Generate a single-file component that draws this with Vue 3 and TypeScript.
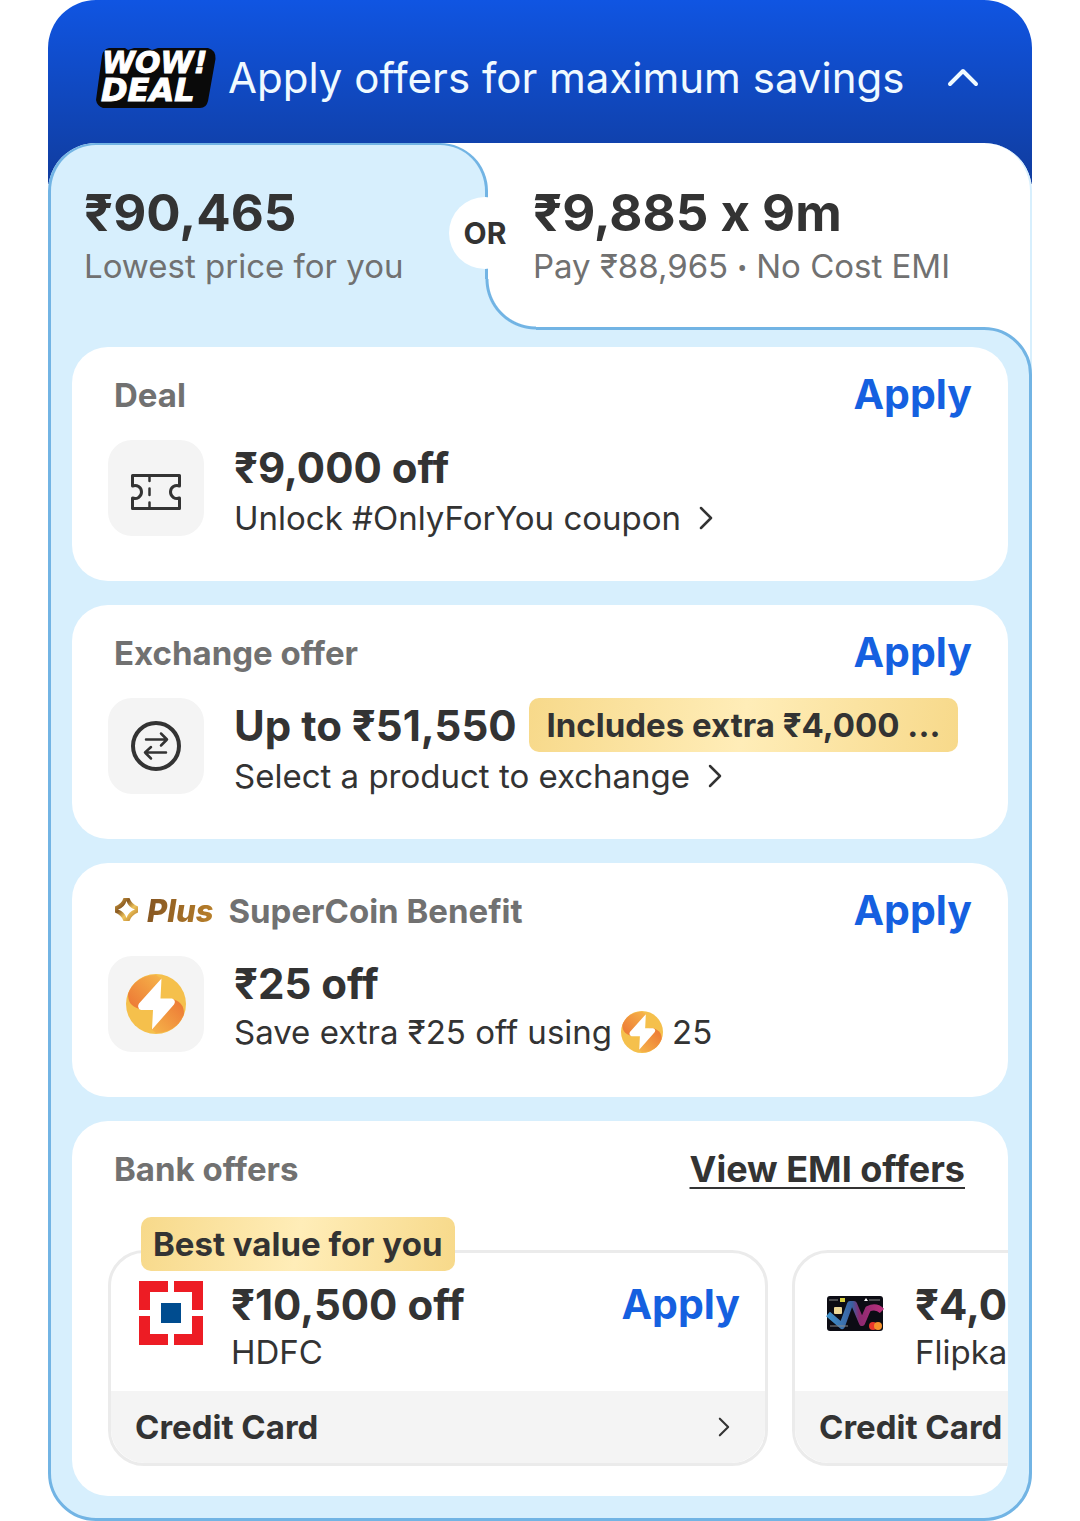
<script setup lang="ts">
import { ref } from 'vue'

interface BankOffer {
  bank: string
  amount: string
  method: string
  logo: 'hdfc' | 'card'
  badge?: string
}

const mode = ref<'full' | 'emi'>('full')

const bankOffers: BankOffer[] = [
  { bank: 'HDFC', amount: '₹10,500 off', method: 'Credit Card', logo: 'hdfc', badge: 'Best value for you' },
  { bank: 'Flipkart Axis', amount: '₹4,000 off', method: 'Credit Card', logo: 'card' },
]
</script>

<template>
  <main class="offers">
    <header class="banner">
      <svg class="wow" viewBox="0 0 120 60" width="120" height="60" role="img" aria-label="WOW! DEAL">
        <path
          d="M13 0H29L32 2L38 0H52L56 2L62 0H112Q120 2 119.500 11L112 53Q110.500 60 104 60H7Q1 58 0 52L6 8Q7 1 13 0Z"
          fill="#0a0a0a"
        />
        <text x="6" y="25" class="wow-text">WOW!</text>
        <text x="5" y="53" class="wow-text deal-text">DEAL</text>
      </svg>
      <h1 class="banner-title">Apply offers for maximum savings</h1>
      <button class="icon-button" type="button" aria-label="Collapse offers">
        <svg viewBox="0 0 36 24" width="36" height="24">
          <path d="M5 18L18 5L31 18" fill="none" stroke="#f0faff" stroke-width="4" stroke-linecap="round" stroke-linejoin="round" />
        </svg>
      </button>
    </header>

    <div class="panel">
      <div class="tabs">
        <div class="tab-slot">
          <button class="tab tab-left" type="button" :aria-pressed="mode === 'full'" @click="mode = 'full'">
            <span class="price">₹90,465</span>
            <span class="note">Lowest price for you</span>
          </button>
        </div>
        <button class="tab tab-right" type="button" :aria-pressed="mode === 'emi'" @click="mode = 'emi'">
          <span class="price">₹9,885 x 9m</span>
          <span class="note">Pay ₹88,965 <span class="dot">•</span> No Cost EMI</span>
        </button>
        <span class="or">OR</span>
      </div>

      <div class="body-wrap">
        <div class="body">
          <section class="card">
            <div class="card-head">
              <h2 class="card-label">Deal</h2>
              <button class="apply" type="button">Apply</button>
            </div>
            <div class="row">
              <div class="tile">
                <svg viewBox="0 -8 52 46" width="52" height="46" fill="none" stroke="#333" stroke-width="3" stroke-linecap="round" stroke-linejoin="round">
                  <path d="M2.500 2.500H49.500V13A6.500 6.500 0 1 0 49.500 25V35.500H2.500V25A6.500 6.500 0 1 0 2.500 13Z" />
                  <path d="M19.500 4V8M19.500 15.500V22M19.500 29.500V34" stroke-width="2.500" />
                </svg>
              </div>
              <div class="texts">
                <p class="amount">₹9,000 off</p>
                <a class="detail detail-link" href="#">Unlock #OnlyForYou coupon
                  <svg class="chevron" viewBox="0 0 14 24" width="14" height="24"><path d="M2 2L12 12L2 22" /></svg>
                </a>
              </div>
            </div>
          </section>

          <section class="card">
            <div class="card-head">
              <h2 class="card-label">Exchange offer</h2>
              <button class="apply" type="button">Apply</button>
            </div>
            <div class="row">
              <div class="tile">
                <svg viewBox="0 0 50 50" width="50" height="50" fill="none" stroke="#333" stroke-linecap="round" stroke-linejoin="round">
                  <circle cx="25" cy="25" r="23" stroke-width="4" />
                  <path d="M15 18.500H36M30 12.500L36 18.500L30 24.500M35 31.500H14M20 26L14 31.500L20 37.500" stroke-width="2.500" />
                </svg>
              </div>
              <div class="texts">
                <div class="amount-line">
                  <p class="amount">Up to ₹51,550</p>
                  <span class="badge">Includes extra ₹4,000 ...</span>
                </div>
                <a class="detail detail-link" href="#">Select a product to exchange
                  <svg class="chevron" viewBox="0 0 14 24" width="14" height="24"><path d="M2 2L12 12L2 22" /></svg>
                </a>
              </div>
            </div>
          </section>

          <section class="card">
            <div class="card-head">
              <div class="plus-label">
                <svg viewBox="0 0 25 25" width="25" height="25">
                  <defs>
                    <linearGradient id="gold" x1="0" y1="0" x2="1" y2="1">
                      <stop offset="0" stop-color="#e7b64a" />
                      <stop offset=".35" stop-color="#8a5a22" />
                      <stop offset=".6" stop-color="#efc45c" />
                      <stop offset="1" stop-color="#a86b1c" />
                    </linearGradient>
                  </defs>
                  <path
                    d="M9.500 1H15.500Q17.500 7 24 9.500V15.500Q17.500 18 15.500 24H9.500Q7.500 18 1 15.500V9.500Q7.500 7 9.500 1ZM12.500 4Q14.500 10.500 21 12.500Q14.500 14.500 12.500 21Q10.500 14.500 4 12.500Q10.500 10.500 12.500 4Z"
                    fill="url(#gold)"
                    fill-rule="evenodd"
                  />
                </svg>
                <span class="plus">Plus</span>
                <h2 class="card-label">SuperCoin Benefit</h2>
              </div>
              <button class="apply" type="button">Apply</button>
            </div>
            <div class="row">
              <div class="tile">
                <svg viewBox="0 0 60 60" width="60" height="60">
                  <defs>
                    <linearGradient id="coinA" x1="0" y1="1" x2="1" y2="0">
                      <stop offset="0" stop-color="#ec7434" />
                      <stop offset="1" stop-color="#f6b64a" />
                    </linearGradient>
                    <linearGradient id="coinB" x1="1" y1="0" x2="0" y2="1">
                      <stop offset="0" stop-color="#ec7434" />
                      <stop offset="1" stop-color="#f6b64a" />
                    </linearGradient>
                  </defs>
                  <g id="coin">
                    <circle cx="30" cy="30" r="30" fill="#f5c04c" />
                    <path d="M13 35C5 32 2 28 2 20C6 8 17 1 30 1L36 5L20 35Z" fill="url(#coinA)" />
                    <path d="M47 25C55 28 58 32 58 40C54 52 43 59 30 59L25 55L40 25Z" fill="url(#coinB)" />
                    <path d="M35.500 4.500L34.500 24.500H46Q50.500 26 48 30.500L26 55.500L27 36H15Q10.500 34 13 29.500Z" fill="#fff" />
                  </g>
                </svg>
              </div>
              <div class="texts">
                <p class="amount">₹25 off</p>
                <p class="detail coin-detail">
                  Save extra ₹25 off using
                  <svg viewBox="0 0 60 60" width="42" height="42" aria-hidden="true"><use href="#coin" /></svg>
                  25
                </p>
              </div>
            </div>
          </section>

          <section class="card bank-card">
            <div class="card-head">
              <h2 class="card-label">Bank offers</h2>
              <a class="emi-link" href="#">View EMI offers</a>
            </div>
            <ul class="bank-list">
              <li v-for="offer in bankOffers" :key="offer.bank" class="bank">
                <span v-if="offer.badge" class="badge bank-badge">{{ offer.badge }}</span>
                <div class="bank-main">
                  <div class="bank-logo">
                    <svg v-if="offer.logo === 'hdfc'" viewBox="0 0 66 66" width="66" height="66">
                      <path d="M1 1H30V12H12V30H1ZM36 1H65V30H54V12H36ZM1 36H12V54H30V65H1ZM54 36H65V65H36V54H54Z" fill="#ed1c24" />
                      <rect x="23" y="23" width="20" height="20" fill="#004c8f" />
                    </svg>
                    <svg v-else viewBox="0 0 58 36" width="58" height="36">
                      <defs>
                        <linearGradient id="ribbon" x1="0" y1="0" x2="1" y2="0">
                          <stop offset="0" stop-color="#3f90c8" />
                          <stop offset=".45" stop-color="#3a60a0" />
                          <stop offset=".58" stop-color="#8a2a70" />
                          <stop offset="1" stop-color="#b8307c" />
                        </linearGradient>
                      </defs>
                      <rect x="1" y="1" width="56" height="35" rx="3" fill="#0c0c14" />
                      <path d="M2 19L16 31L24 9H28L36 28L42 14Q50 10 56 16" fill="none" stroke="url(#ribbon)" stroke-width="6" stroke-linejoin="round" />
                      <rect x="8" y="12" width="8" height="7" rx="1" fill="#ecd898" />
                      <path d="M3 5H12M43 5H54M4 31H22" stroke="#888" stroke-width="1" />
                      <rect x="14" y="3" width="5" height="4" fill="#d8d040" />
                      <path d="M38 6L40 3L42 6Z" fill="#fff" />
                      <circle cx="47" cy="31" r="4" fill="#e8382c" />
                      <circle cx="52" cy="31" r="4" fill="#f5912c" />
                    </svg>
                  </div>
                  <div class="bank-texts">
                    <p class="amount">{{ offer.amount }}</p>
                    <p class="detail">{{ offer.bank }}</p>
                  </div>
                  <button class="apply" type="button">Apply</button>
                </div>
                <a class="bank-foot" href="#">
                  <span>{{ offer.method }}</span>
                  <svg class="chevron" viewBox="0 0 14 24" width="12" height="20"><path d="M2 2L12 12L2 22" /></svg>
                </a>
              </li>
            </ul>
          </section>
        </div>
      </div>
    </div>
  </main>
</template>

<style>
body {
  background: #fff;
}
</style>

<style scoped>
.offers,
.offers * {
  box-sizing: border-box;
}

.offers {
  margin: 0 48px;
  border-radius: 48px 48px 0 0;
  background: linear-gradient(#1055e2, #103c9e) no-repeat 0 0 / 100% 184px;
  font-family: Inter, "Noto Sans", sans-serif;
  font-feature-settings: "calt" 0;
  color: #333;
}

h1,
h2,
p,
ul {
  margin: 0;
  padding: 0;
}

button {
  border: 0;
  padding: 0;
  background: none;
  color: inherit;
  font: inherit;
  font-feature-settings: inherit;
  cursor: pointer;
}

a {
  color: inherit;
  text-decoration: none;
}

svg {
  display: block;
  flex: none;
}

.banner {
  display: flex;
  align-items: center;
  height: 143px;
  padding: 12px 51px 0 48px;
}

.wow-text {
  fill: #fff;
  stroke: #fff;
  stroke-width: 1;
  font: italic 700 30px "DejaVu Sans", sans-serif;
}

.deal-text {
  font-size: 32px;
}

.banner-title {
  flex: 1;
  padding-left: 12px;
  color: #f0faff;
  font-size: 42px;
  font-weight: 400;
  line-height: 56px;
  white-space: nowrap;
}

.panel {
  border-radius: 48px;
  background: #fff;
}

.tabs {
  position: relative;
  z-index: 1;
  display: flex;
  height: 184px;
}

.tab-slot {
  flex: none;
  width: 440px;
}

.tab {
  display: flex;
  flex-direction: column;
  align-items: flex-start;
  padding-top: 42px;
  text-align: left;
  white-space: nowrap;
}

.tab-left {
  width: 100%;
  height: 187px;
  padding-top: 40px;
  padding-left: 33px;
  border: 3px solid #72b4e4;
  border-top-width: 2px;
  border-bottom: 0;
  border-radius: 48px 48px 0 0;
  background: #d7effd;
}

.tab-right {
  position: relative;
  flex: 1;
  padding-left: 45px;
  border-right: 2px solid #d7effd;
  border-radius: 0 48px 0 0;
}

.tab-right::before {
  content: "";
  position: absolute;
  left: -3px;
  bottom: -3px;
  width: 51px;
  height: 51px;
  background: radial-gradient(circle at 100% 0, #fff 47px, #72b4e4 48px, #72b4e4 50px, #d7effd 51px);
}

.price {
  font-size: 51px;
  font-weight: 700;
  line-height: 56px;
}

.note {
  color: #717171;
  font-size: 33px;
  line-height: 50px;
}

.dot {
  font-family: Roboto, sans-serif;
  font-size: 28px;
}

.or {
  position: absolute;
  top: 54px;
  left: 401px;
  width: 72px;
  height: 72px;
  border-radius: 36px;
  background: #fff;
  font-size: 30px;
  font-weight: 700;
  line-height: 72px;
  text-align: center;
}

.body-wrap {
  border-radius: 0 0 48px 48px;
  box-shadow: inset -2px 0 #d7effd;
}

.body {
  display: flex;
  flex-direction: column;
  gap: 24px;
  padding: 17px 21px 22px;
  border: 3px solid #72b4e4;
  border-radius: 0 48px 48px 48px;
  background: #d7effd;
}

.card {
  padding: 0 36px 45px;
  border-radius: 36px;
  background: #fff;
  overflow: hidden;
}

.card-head {
  display: flex;
  align-items: center;
  justify-content: space-between;
  height: 93px;
  padding-left: 6px;
}

.card-label {
  padding-top: 2px;
  color: #717171;
  font-size: 33px;
  font-weight: 700;
  line-height: 44px;
}

.apply {
  color: #1560e0;
  font-size: 41px;
  font-weight: 700;
  line-height: 54px;
}

.row {
  display: flex;
  gap: 30px;
}

.tile {
  display: flex;
  flex: none;
  align-items: center;
  justify-content: center;
  width: 96px;
  height: 96px;
  border-radius: 24px;
  background: #f4f4f4;
}

.texts {
  flex: 1;
  min-width: 0;
  height: 96px;
}

.amount {
  padding-top: 1px;
  font-size: 42px;
  font-weight: 700;
  line-height: 54px;
  white-space: nowrap;
}

.amount-line {
  display: flex;
  align-items: flex-start;
  gap: 12px;
}

.detail {
  display: flex;
  align-items: center;
  font-size: 33px;
  line-height: 40px;
  white-space: nowrap;
}

.detail-link {
  gap: 18px;
  line-height: 46px;
}

.coin-detail {
  gap: 9px;
}

.chevron path {
  fill: none;
  stroke: #333;
  stroke-width: 2.500;
  stroke-linecap: round;
  stroke-linejoin: round;
}

.badge {
  height: 54px;
  padding: 0 18px;
  border-radius: 10px;
  background: linear-gradient(100deg, #f7d98a, #ffedb8 50%, #f7d98a);
  color: #333;
  font-size: 33px;
  font-weight: 700;
  line-height: 54px;
  white-space: nowrap;
}

.plus-label {
  display: flex;
  align-items: center;
}

.plus {
  padding: 2px 15px 0 8px;
  background: linear-gradient(100deg, #7d4f20, #c58a2c);
  background-clip: text;
  color: transparent;
  font-size: 31px;
  font-style: italic;
  font-weight: 800;
  line-height: 44px;
}

.bank-card {
  padding-bottom: 30px;
}

.emi-link {
  margin-right: 7px;
  padding-top: 2px;
  font-size: 36px;
  font-weight: 700;
  line-height: 48px;
  text-decoration: underline;
  text-decoration-thickness: 2px;
  text-underline-offset: 5px;
}

.bank-list {
  display: flex;
  gap: 24px;
  padding-top: 36px;
  list-style: none;
}

.bank {
  position: relative;
  flex: none;
  width: 660px;
  border: 3px solid #ebebeb;
  border-radius: 36px;
}

.bank-badge {
  position: absolute;
  top: -36px;
  left: 30px;
  padding: 0 13px 0 12px;
}

.bank-main {
  display: flex;
  height: 138px;
  padding: 24px 25px 0 27px;
}

.bank-logo {
  display: flex;
  align-items: center;
  justify-content: center;
  width: 66px;
  height: 72px;
}

.bank-texts {
  flex: 1;
  padding-left: 27px;
}

.bank-main .apply {
  align-self: flex-start;
}

.bank-foot {
  display: flex;
  align-items: center;
  justify-content: space-between;
  height: 72px;
  padding: 0 35px 0 24px;
  border-radius: 0 0 34px 34px;
  background: #f4f4f4;
  font-size: 33px;
  font-weight: 700;
}
</style>
